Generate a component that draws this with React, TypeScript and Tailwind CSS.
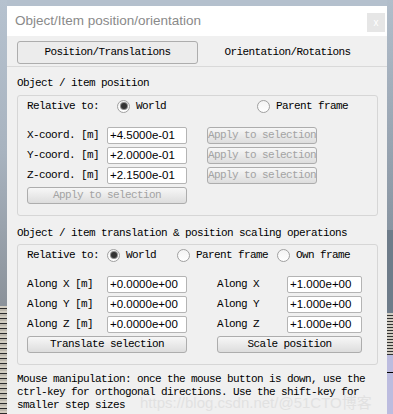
import React from "react";

const mono = "font-['Liberation_Mono',monospace] text-[11px] leading-[13px] tracking-[-0.6px] text-black whitespace-nowrap";

const Radio = ({ checked, label }: { checked?: boolean; label: string }) => (
  <div className="flex items-center gap-[6px]">
    <span className="w-[13px] h-[13px] rounded-full border border-[#a0a0a0] bg-gradient-to-b from-[#f4f4f4] to-white flex items-center justify-center shrink-0">
      {checked && <span className="w-[6px] h-[6px] rounded-full bg-[#333333] ring-1 ring-[#8a8a8a]" />}
    </span>
    <span className={mono}>{label}</span>
  </div>
);

const Field = ({ value, className }: { value: string; className: string }) => (
  <input
    readOnly
    value={value}
    className={
      "h-[17px] border border-[#b4b4b4] rounded-[2px] bg-white px-[2px] font-['Liberation_Sans',sans-serif] text-[11.5px] text-black outline-none " +
      className
    }
  />
);

const Btn = ({ children, className, disabled }: { children: React.ReactNode; className: string; disabled?: boolean }) => (
  <button
    type="button"
    className={
      "h-[17px] rounded-[3px] border border-[#adadad] bg-gradient-to-b from-[#f7f7f7] to-[#dddddd] flex items-center justify-center " +
      mono +
      (disabled ? " !text-[#a3a3a3]" : "") +
      " " +
      className
    }
  >
    {children}
  </button>
);

const App: React.FC = () => {
  return (
    <div className="w-[393px] h-[414px] overflow-hidden flex flex-row bg-[#b4c0cd]">
      {/* backdrop, left edge */}
      <div className="w-[7px] h-full flex flex-col shrink-0">
        <div className="h-[306px] bg-gradient-to-b from-[#b6c2cf] via-[#a8b3bf] to-[#8b929a]" />
        <div className="flex-1 bg-[repeating-linear-gradient(to_bottom,#d2cdc1_0px,#d2cdc1_2px,#2a2a2a_2px,#2a2a2a_3px,#bdb8ad_3px,#bdb8ad_5px)]" />
      </div>

      {/* window */}
      <div className="w-[380px] shrink-0 flex flex-col pt-[6px]">
        <div className="flex-1 bg-[#f0f0f0] flex flex-col relative">
          {/* title bar */}
          <div className="h-[30px] bg-white flex justify-between pl-[8px] pr-[2px]">
            <span className="self-center font-['Liberation_Sans',sans-serif] text-[13.5px] text-[#8a8a8a] leading-none">
              Object/Item position/orientation
            </span>
            <span className="mt-[7px] w-[18px] h-[19px] bg-[#e6e6e6] text-white text-[10px] leading-none flex items-center justify-center font-['Liberation_Sans',sans-serif]">
              x
            </span>
          </div>

          {/* tabs */}
          <div className="flex pt-[5px] pb-[2px] px-[10px] border-b border-[#d9d9d9]">
            <div className={"w-[181px] h-[23px] rounded-[3px] border border-[#adadad] bg-[#ececec] flex items-center justify-center " + mono}>
              Position/Translations
            </div>
            <div className={"flex-1 h-[23px] flex items-center justify-center " + mono}>Orientation/Rotations</div>
          </div>

          {/* content */}
          <div className="flex flex-col pl-[10px] pr-[9px]">
            <div className={"h-[28px] pt-[4px] flex items-center " + mono}>Object / item position</div>
            <div className="border border-[#d6d6d6] rounded-[3px] pt-[1px] pb-[11px] pl-[9px] flex flex-col">
              <div className="h-[18px] flex items-center">
                <span className={"w-[90px] " + mono}>Relative to:</span>
                <div className="w-[140px]">
                  <Radio checked label="World" />
                </div>
                <Radio label="Parent frame" />
              </div>
              <div className="flex flex-col gap-[3px] mt-[12px]">
                {[
                  ["X-coord. [m]", "+4.5000e-01"],
                  ["Y-coord. [m]", "+2.0000e-01"],
                  ["Z-coord. [m]", "+2.1500e-01"],
                ].map(([label, value]) => (
                  <div key={label} className="h-[17px] flex items-center">
                    <span className={"w-[80px] " + mono}>{label}</span>
                    <Field value={value} className="w-[80px]" />
                    <Btn disabled className="ml-[20px] w-[110px]">
                      Apply to selection
                    </Btn>
                  </div>
                ))}
                <Btn disabled className="w-[160px]">
                  Apply to selection
                </Btn>
              </div>
            </div>

            <div className={"h-[28px] pt-[6px] flex items-center " + mono}>
              Object / item translation &amp; position scaling operations
            </div>
            <div className="border border-[#d6d6d6] rounded-[3px] pt-[1px] pb-[11px] pl-[9px] flex flex-col">
              <div className="h-[18px] flex items-center">
                <span className={"w-[80px] " + mono}>Relative to:</span>
                <div className="w-[70px]">
                  <Radio checked label="World" />
                </div>
                <div className="w-[100px]">
                  <Radio label="Parent frame" />
                </div>
                <Radio label="Own frame" />
              </div>
              <div className="flex flex-col gap-[3px] mt-[12px]">
                {["X", "Y", "Z"].map((axis) => (
                  <div key={axis} className="h-[17px] flex items-center">
                    <span className={"w-[80px] " + mono}>Along {axis} [m]</span>
                    <Field value="+0.0000e+00" className="w-[80px]" />
                    <span className={"ml-[30px] w-[70px] " + mono}>Along {axis}</span>
                    <Field value="+1.000e+00" className="w-[75px]" />
                  </div>
                ))}
                <div className="flex">
                  <Btn className="w-[160px]">Translate selection</Btn>
                  <Btn className="ml-[30px] w-[145px]">Scale position</Btn>
                </div>
              </div>
            </div>

            <p className={"mt-[8px] w-[361px] !whitespace-normal " + mono}>
              Mouse manipulation: once the mouse button is down, use the ctrl-key for orthogonal directions. Use the
              shift-key for smaller step sizes
            </p>
          </div>

          {/* faint watermark laid over the footer text */}
          <span className="absolute left-[133px] top-[389px] font-['Liberation_Sans','Noto_Sans_CJK_SC',sans-serif] text-[15px] leading-none text-[#d8d8d8] opacity-60 whitespace-nowrap pointer-events-none">
            https://blog.csdn.net/@51CTO博客
          </span>
        </div>
      </div>

      {/* backdrop, right edge */}
      <div className="flex-1 h-full flex flex-col">
        <div className="h-[230px] bg-gradient-to-b from-[#b2becb] to-[#8995a2]" />
        <div className="h-[83px] bg-[#6e7c8a]" />
        <div className="h-[42px] bg-[repeating-linear-gradient(to_bottom,#d0ccc2_0px,#d0ccc2_2px,#333_2px,#333_3px)]" />
        <div className="h-[17px] bg-[#bcbcdf]" />
        <div className="h-[1px] bg-black" />
        <div className="flex-1 bg-[#bcbcdf]" />
      </div>
    </div>
  );
};

export default App;
